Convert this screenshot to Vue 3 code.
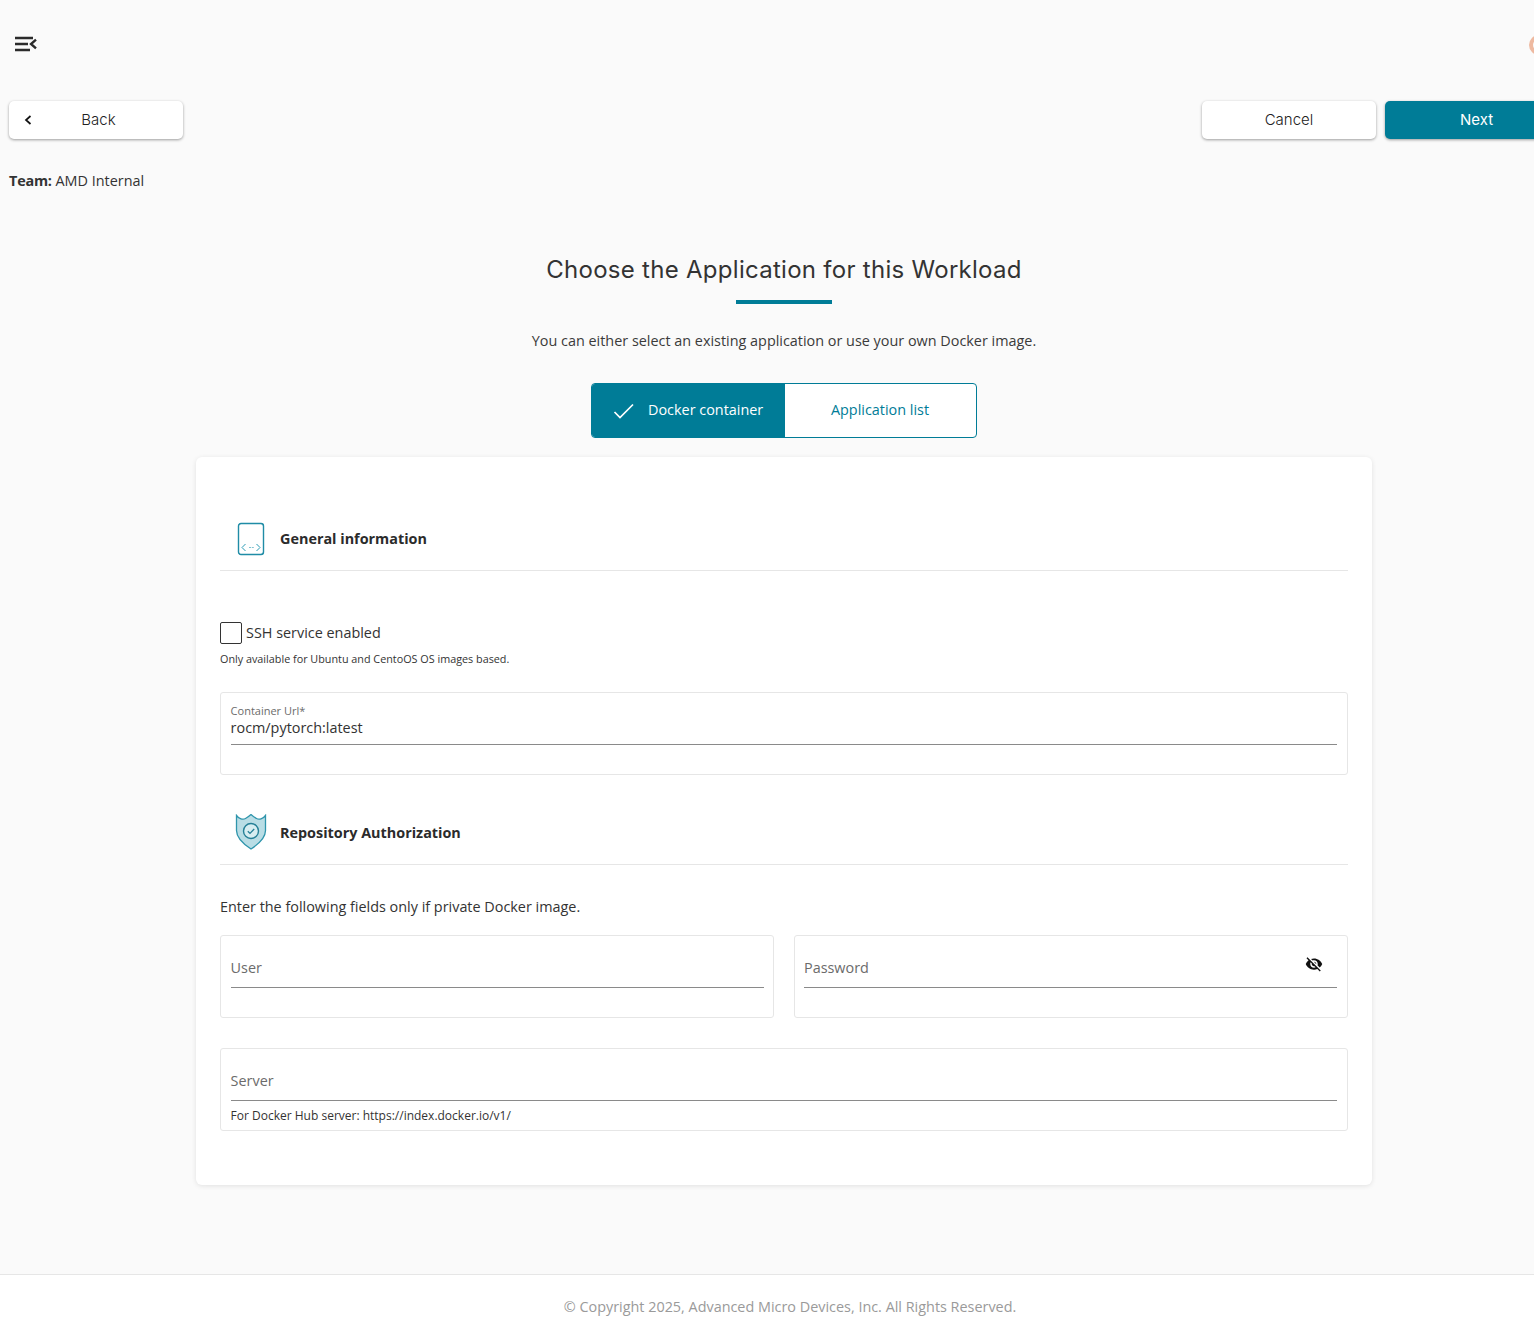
<script setup>
</script>

<template>
  <div class="app">
    <header class="topbar">
      <svg class="menu" width="24" height="16" viewBox="0 0 24 16" fill="none" stroke="#2b2b2b" stroke-width="2.4">
        <path d="M1 2h18M1 8h13M1 14h15" />
        <path d="M22 3.600 17 8l5 4.400" stroke-width="2.400" />
      </svg>
      <span class="avatar"></span>
    </header>

    <main class="main">
      <div class="actions">
        <button class="btn back">
          <svg class="chev" width="8" height="10" viewBox="0 0 8 10" fill="none" stroke="#111" stroke-width="1.700"><path d="M6.500 1 2 5l4.500 4" /></svg>
          <span>Back</span>
        </button>
        <div class="right">
          <button class="btn">Cancel</button>
          <button class="btn next">Next</button>
        </div>
      </div>

      <p class="team"><b>Team:</b> AMD Internal</p>

      <div class="heading">
        <h1>Choose the Application for this Workload</h1>
        <div class="bar"></div>
        <p class="lead">You can either select an existing application or use your own Docker image.</p>
        <div class="toggle">
          <div class="opt on">
            <svg width="22" height="16" viewBox="0 0 22 16" fill="none" stroke="#fff" stroke-width="1.700"><path d="M1.500 9l5.500 5.500L20 1.500" /></svg>
            <span>Docker container</span>
          </div>
          <div class="opt">Application list</div>
        </div>
      </div>

      <section class="card">
        <div class="sec first">
          <svg class="ic" width="28" height="34" viewBox="0 0 28 34" fill="none">
            <rect x="1.500" y="1.500" width="25" height="31" rx="2.500" fill="#fff" stroke="#6fb6c6" stroke-width="1" />
            <rect x="1.500" y="1.500" width="25" height="31" rx="2.500" stroke="#1f8ca6" stroke-width="1.400" />
            <path d="M8.500 22 5 25.500l3.500 3.500M19.500 22l3.500 3.500-3.500 3.500" stroke="#2a9bb5" stroke-width="1" />
            <path d="M12 25.500h2M14.800 25.500h2" stroke="#5fb2c4" stroke-width="0.800" />
          </svg>
          <h2>General information</h2>
        </div>

        <label class="check"><span class="box"></span><span>SSH service enabled</span></label>
        <p class="hint only">Only available for Ubuntu and CentoOS OS images based.</p>

        <div class="field url">
          <div class="inner">
            <span class="float">Container Url*</span>
            <span class="value">rocm/pytorch:latest</span>
          </div>
        </div>

        <div class="sec second">
          <svg class="ic shield" width="32" height="36" viewBox="0 0 32 36" fill="none">
            <path d="M1.500 1.500c2.500 3.500 6.500 4.500 9 3 1.800-1 3.800-2.500 5.500-4 1.700 1.500 3.700 3 5.500 4 2.500 1.500 6.500.5 9-3v15c0 7-6 13-14.500 18.500C7.500 29.500 1.500 23.500 1.500 16.500z" fill="#b9dde5" stroke="#2f95ac" stroke-width="1.300" />
            <circle cx="16" cy="17" r="7.500" fill="#d7edf1" stroke="#247f96" stroke-width="1.400" />
            <path d="M12.800 17.200l2.200 2.200 4.200-4.400" stroke="#247f96" stroke-width="1.300" />
          </svg>
          <h2>Repository Authorization</h2>
        </div>

        <p class="note">Enter the following fields only if private Docker image.</p>

        <div class="two">
          <div class="field">
            <div class="inner ph"><span class="placeholder">User</span></div>
          </div>
          <div class="field">
            <div class="inner ph">
              <span class="placeholder">Password</span>
              <svg class="eye" width="20" height="18" viewBox="0 0 24 24" fill="#111">
                <path d="M12 7c2.760 0 5 2.240 5 5 0 .65-.13 1.260-.36 1.830l2.920 2.920c1.510-1.260 2.700-2.890 3.430-4.750-1.730-4.390-6-7.500-11-7.500-1.400 0-2.740.25-3.980.7l2.160 2.160C10.740 7.130 11.350 7 12 7zM2 4.270l2.280 2.280.46.46C3.080 8.300 1.780 10.020 1 12c1.730 4.390 6 7.500 11 7.500 1.550 0 3.030-.3 4.380-.84l.42.42L19.730 22 21 20.730 3.270 3 2 4.270zM7.530 9.800l1.550 1.550c-.05.21-.08.43-.08.65 0 1.660 1.340 3 3 3 .22 0 .44-.03.65-.08l1.550 1.550c-.67.33-1.410.53-2.200.53-2.760 0-5-2.240-5-5 0-.79.2-1.530.53-2.200zm4.310-.78l3.150 3.150.02-.16c0-1.660-1.340-3-3-3l-.17.010z" />
              </svg>
            </div>
          </div>
        </div>

        <div class="field server">
          <div class="inner ph"><span class="placeholder">Server</span></div>
          <p class="hint help">For Docker Hub server: https://index.docker.io/v1/</p>
        </div>
      </section>
    </main>

    <footer class="footer">© Copyright 2025, Advanced Micro Devices, Inc. All Rights Reserved.</footer>
  </div>
</template>

<style scoped>
.app {
  width: 1534px;
  height: 1340px;
  overflow: hidden;
  background: #fafafa;
  font-family: "Open Sans", "Noto Sans", sans-serif;
  color: #2b2b2b;
  display: flex;
  flex-direction: column;
}
.topbar {
  height: 101px;
  flex: none;
  padding: 36px 0 0 14px;
  box-sizing: border-box;
  position: relative;
}
.menu { display: block; }
.avatar {
  position: absolute;
  left: 1529px;
  top: 35px;
  width: 20px;
  height: 20px;
  box-sizing: border-box;
  border-radius: 50%;
  border: 4px solid #eeb9a0;
}
.main {
  width: 1550px;
  margin-left: 9px;
  flex: 1;
}
.actions {
  display: flex;
  justify-content: space-between;
}
.right { display: flex; gap: 9px; }
.btn {
  width: 174px;
  height: 38px;
  border: 0;
  border-radius: 5px;
  background: #fff;
  box-shadow: 0 1px 3px rgba(0, 0, 0, 0.38);
  font-family: Inter, "Open Sans", sans-serif;
  font-size: 15px;
  font-weight: 300;
  color: #222;
  padding: 0 0 2px;
  position: relative;
}
.back { padding-left: 5px; }
.back .chev { position: absolute; left: 15px; top: 14px; }
.next { background: #007c97; color: #fff; padding-left: 9px; font-weight: 400; }
.team {
  margin: 32px 0 0;
  font-size: 14.400px;
  line-height: 19px;
  color: #333;
}
.team b { font-weight: 700; letter-spacing: -0.2px; }
.heading {
  text-align: center;
  display: flex;
  flex-direction: column;
  align-items: center;
}
h1 {
  margin: 64px 0 0;
  font-family: Inter, "Open Sans", sans-serif;
  font-size: 24px;
  line-height: 32px;
  font-weight: 400;
  letter-spacing: 0.28px;
  color: #333;
}
.bar {
  width: 96px;
  height: 4px;
  background: #007c97;
  margin-top: 14px;
}
.lead {
  margin: 27px 0 0;
  font-size: 14.400px;
  line-height: 19px;
  color: #3a3a3a;
}
.toggle {
  margin-top: 33px;
  width: 386px;
  height: 55px;
  box-sizing: border-box;
  border: 1px solid #007c97;
  border-radius: 4px;
  background: #fff;
  display: flex;
  overflow: hidden;
  font-size: 14.400px;
}
.opt {
  flex: 1;
  display: flex;
  align-items: center;
  justify-content: center;
  color: #007c97;
  padding-bottom: 2px;
  padding-right: 1px;
}
.opt.on {
  flex: none;
  width: 193px;
  background: #007c97;
  color: #fff;
  font-weight: 500;
  gap: 13px;
  justify-content: flex-start;
  padding-left: 21px;
  padding-right: 0;
  box-sizing: border-box;
}
.opt.on svg { margin-top: 2px; }
.card {
  width: 1176px;
  height: 728px;
  box-sizing: border-box;
  margin: 19px 0 0 187px;
  padding: 65px 24px 0;
  background: #fff;
  border-radius: 6px;
  box-shadow: 0 1px 5px rgba(0, 0, 0, 0.1);
}
.sec {
  display: flex;
  border-bottom: 1px solid #e6e6e6;
  padding-left: 17px;
}
.sec h2 {
  margin: 0;
  font-size: 14.400px;
  line-height: 19px;
  font-weight: 700;
  color: #2b2b2b;
}
.sec .ic { flex: none; }
.first { height: 48px; align-items: flex-start; }
.first .ic { margin-right: 15px; }
.first h2 { margin-top: 7px; }
.second { margin-top: 39px; height: 50px; padding-left: 15px; align-items: flex-start; }
.second .ic { margin-right: 13px; }
.second h2 { margin-top: 9px; }
.check {
  margin-top: 51px;
  display: flex;
  align-items: center;
  gap: 4px;
  font-size: 14.400px;
  line-height: 22px;
  color: #333;
}
.box {
  width: 22px;
  height: 22px;
  box-sizing: border-box;
  border: 1px solid #333;
  border-radius: 2px;
  background: #fff;
}
.hint {
  margin: 0;
  font-size: 10.800px;
  line-height: 14px;
  color: #333;
}
.only { margin-top: 8px; }
.field {
  border: 1px solid #e6e6e6;
  border-radius: 3px;
  padding: 0 9.600px;
  box-sizing: border-box;
  background: #fff;
}
.url {
  margin-top: 26px;
  height: 83px;
}
.inner {
  border-bottom: 1px solid #8a8a8a;
  height: 52px;
  box-sizing: border-box;
  position: relative;
}
.float {
  display: block;
  padding-top: 11px;
  font-size: 11px;
  line-height: 13px;
  color: #6b6b6b;
}
.value {
  display: block;
  padding-top: 1px;
  font-size: 14.400px;
  line-height: 20px;
  color: #333;
}
.ph { padding-top: 22px; }
.placeholder {
  display: block;
  font-size: 14.400px;
  line-height: 20px;
  color: #6b6b6b;
}
.eye { position: absolute; right: 13px; top: 19px; }
.note {
  margin: 32px 0 0;
  font-size: 14.400px;
  line-height: 19px;
  color: #333;
}
.two {
  margin-top: 19px;
  display: grid;
  grid-template-columns: 1fr 1fr;
  gap: 20px;
}
.two .field { height: 83px; }
.two .field:first-child { padding-right: 9px; }
.two .field:last-child { padding-left: 9px; }
.server {
  margin-top: 30px;
  height: 83px;
}
.help { margin-top: 8px; font-size: 12px; line-height: 14px; }
.footer {
  height: 66px;
  flex: none;
  box-sizing: border-box;
  border-top: 1px solid #e6e6e6;
  background: #fff;
  padding: 22px 12px 0 0;
  text-align: center;
  width: 1592px;
  font-size: 14.400px;
  line-height: 19px;
  color: #9a9a9a;
}
</style>
